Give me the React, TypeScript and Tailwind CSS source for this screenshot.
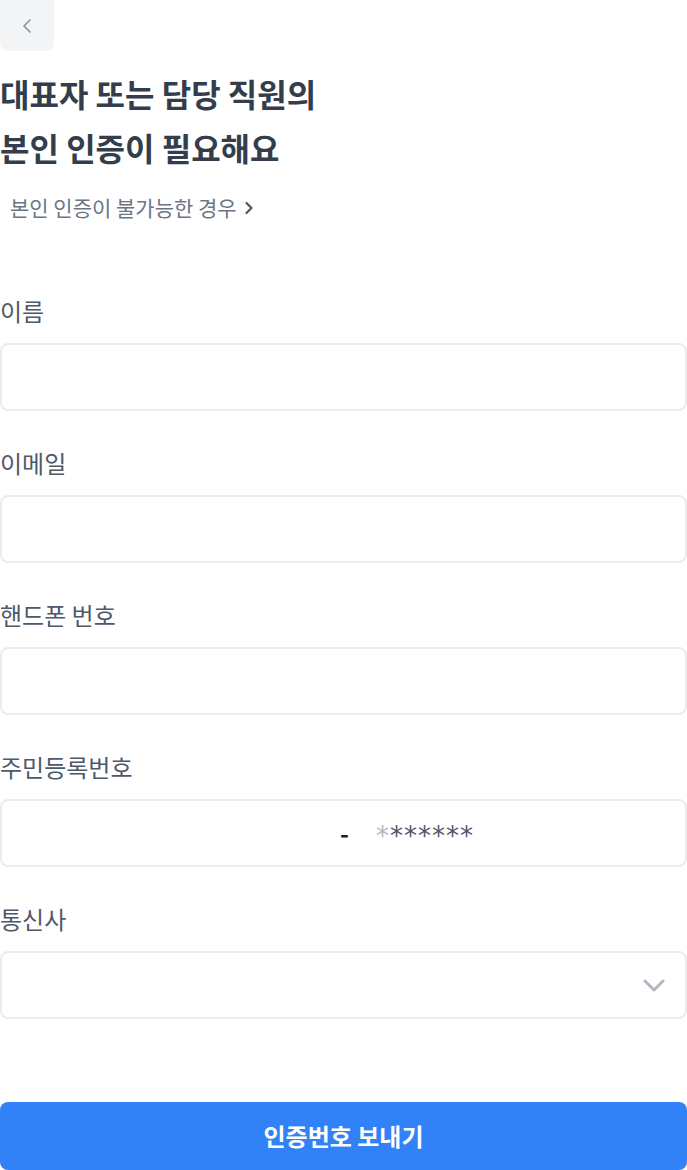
import { ChevronLeft, ChevronRight } from "lucide-react";

const fields = ["이름", "이메일", "핸드폰 번호"];

const FieldLabel = ({ children }: { children: string }) => (
  <p className="mb-[15px] h-[34px] text-[24px] leading-[34px] text-[#4e5968]">{children}</p>
);

export default function App() {
  return (
    <div
      className="min-h-[1170px] w-full overflow-hidden bg-white"
      style={{ fontFamily: '"Noto Sans CJK KR", "Noto Sans", sans-serif' }}
    >
      <button
        type="button"
        className="-mt-[5px] flex h-[56px] w-[54px] items-center justify-center rounded-lg bg-[#f2f4f6] pt-[5px]"
      >
        <ChevronLeft className="h-6 w-6 text-[#8b95a1]" strokeWidth={1.75} />
      </button>

      <h1 className="mt-[15px] text-[32px] font-bold leading-[54px] text-[#333d4b]">
        대표자 또는 담당 직원의
        <br />
        본인 인증이 필요해요
      </h1>

      <button
        type="button"
        className="mt-[20px] flex items-center gap-[2px] pl-[10px] text-[21px] leading-[27px] text-[#6b7684]"
      >
        본인 인증이 불가능한 경우
        <ChevronRight className="h-[20px] w-[20px] text-[#4e5968]" strokeWidth={2.75} />
      </button>

      <div className="mt-[73px] flex flex-col gap-[35px]">
        {fields.map((label) => (
          <div key={label}>
            <FieldLabel>{label}</FieldLabel>
            <input
              type="text"
              className="h-[68px] w-full rounded-lg border-2 border-[#eaecef] bg-white px-4 text-[20px] outline-none"
            />
          </div>
        ))}

        <div>
          <FieldLabel>주민등록번호</FieldLabel>
          <div className="flex h-[68px] w-full items-center rounded-lg border-2 border-[#eaecef] bg-white">
            <input type="text" className="h-full w-[338px] rounded-l-lg px-4 text-[20px] outline-none" />
            <span className="w-[36px] text-[24px] font-bold text-[#191f28]">-</span>
            <span
              className="pt-[6px] text-[26px] leading-none tracking-[1px] text-[#4e5968]"
              style={{ fontFamily: '"DejaVu Sans", sans-serif' }}
            >
              <span className="text-[#b0b8c1]">*</span>******
            </span>
          </div>
        </div>

        <div>
          <FieldLabel>통신사</FieldLabel>
          <div className="flex h-[68px] w-full items-center justify-end rounded-lg border-2 border-[#eaecef] bg-white pr-[20px]">
            <svg width="22" height="14" viewBox="0 0 22 14" fill="none" className="mt-[2px]">
              <polyline
                points="2,2 11,11 20,2"
                stroke="#b0b8c1"
                strokeWidth="3"
                strokeLinecap="round"
                strokeLinejoin="round"
              />
            </svg>
          </div>
        </div>
      </div>

      <button
        type="button"
        className="mt-[83px] flex h-[68px] w-full items-center justify-center rounded-lg bg-[#3182f6] text-[24px] font-bold text-white"
      >
        인증번호 보내기
      </button>
    </div>
  );
}
